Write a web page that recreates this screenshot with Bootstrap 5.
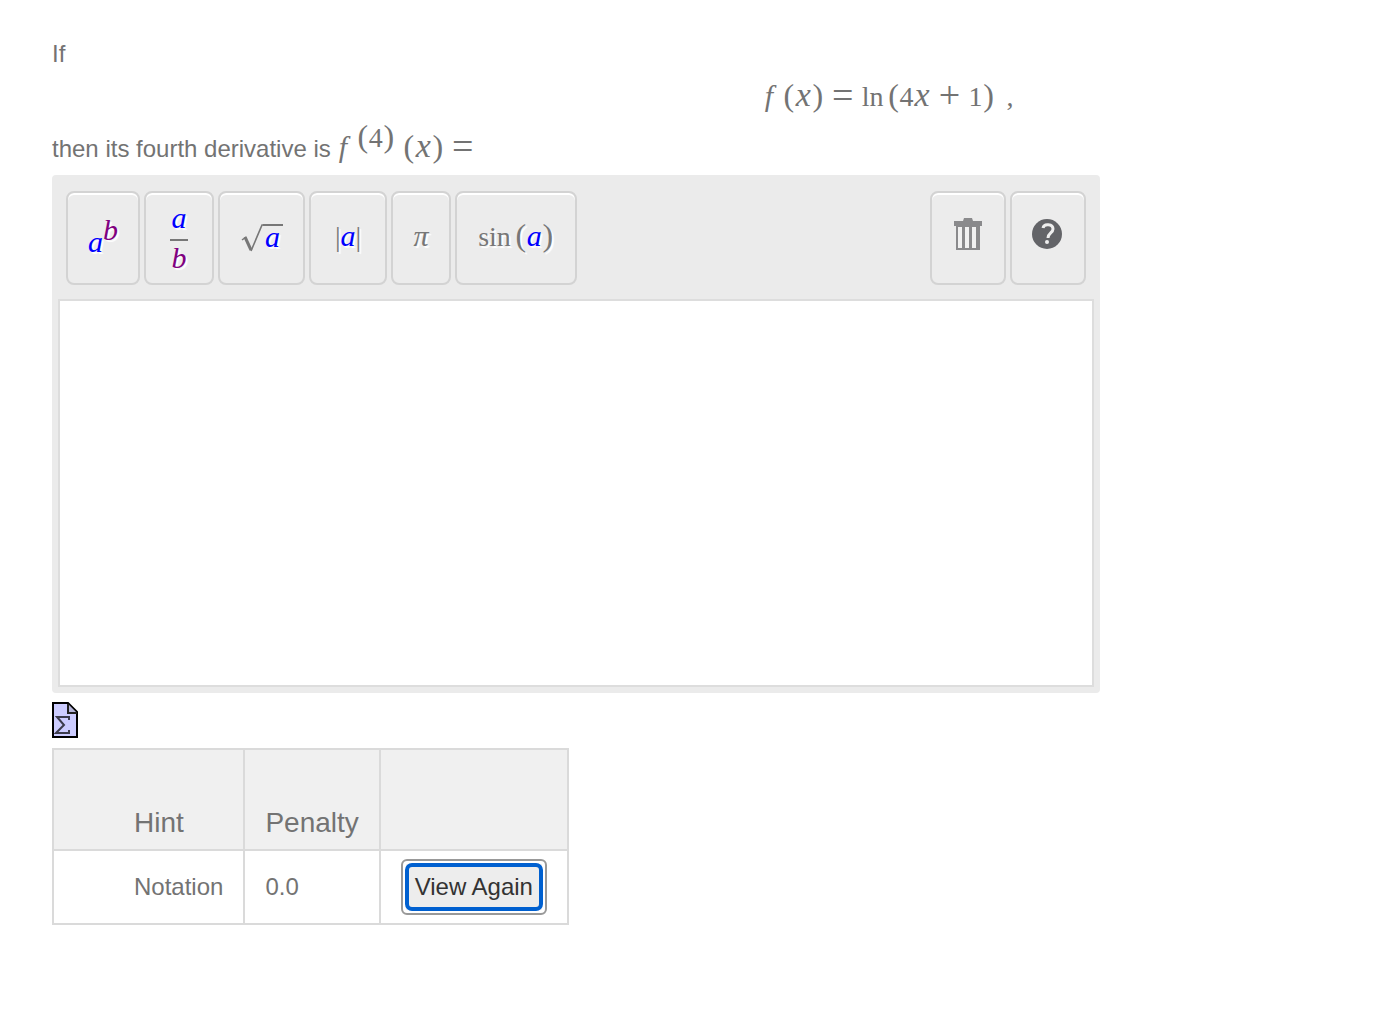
<!DOCTYPE html>
<html lang="en">
<head>
<meta charset="utf-8">
<meta name="viewport" content="width=device-width, initial-scale=1">
<title>Fourth derivative</title>
<link rel="stylesheet" href="https://cdn.jsdelivr.net/npm/bootstrap@5.3.0/dist/css/bootstrap.min.css">
<style>
body{font:24px/36px "Liberation Sans",Arial,sans-serif;color:#737373;background:#fff}
.question{padding:36px 52px}
.display-eq{padding-left:30%;margin:3px 0 10px}
.formula{font-family:"Liberation Serif","Times New Roman",serif;font-size:28px;line-height:36px;white-space:nowrap;display:inline-flex;align-items:baseline}
.formula>span{display:inline-block;text-align:center;flex:none}
.formula i{font-size:30px}
.formula>.fn{width:18px;font-style:italic;font-size:30px;text-align:left}
.par{width:12px;font-size:32px}
.vx{width:17px;font-style:italic;font-size:34px}
.rel{width:38px;font-size:38px;position:relative;top:2px}
.sup{position:relative;top:-10px}
.statement{height:36px;margin-bottom:13px}
.editor{max-width:1048px;background:#ebebeb;border-radius:4px;padding:16px 6px 6px}
.tools{padding:0 8px;margin-bottom:14px;gap:4px}
.tool{height:94px;border:2px solid #d3d3d3;border-radius:8px;background:#ececec;color:#777;padding:0;box-shadow:inset 0 2px 0 #fff;text-shadow:2px 2px 1px #fff;display:flex;align-items:center;justify-content:center}
.tool .formula{margin-bottom:4px}
.va{color:#00f}
.vb{color:#800080}
.t-pow{width:74px}.t-frac{width:70px}.t-root{width:87px}.t-abs{width:78px}.t-pi{width:60px}.t-sin{width:122px}.t-icon{width:76px}
.power{margin-top:12px}
.raised{position:relative;top:-12px}
.fraction{font:italic 30px/34px "Liberation Serif",serif}
.fraction span{display:block;width:18px;text-align:center}
.fraction span:first-child{padding-bottom:4px}
.fraction span+span{border-top:2px solid #777}
.radicand{border-top:2px solid #777;font:italic 30px/22px "Liberation Serif",serif;height:28px;width:20px;text-align:center}
.answer{display:block;width:100%;height:388px;border:2px solid #ddd;border-radius:0;resize:none;padding:12px;background:#fff}
.preview{margin:9px 0 10px}
.hints{border-collapse:collapse}
.hints th,.hints td{border:2px solid #dadada;padding:8px 20px}
.hints th:first-child,.hints td:first-child{padding-left:80px}
.hints th{height:101px;background:#f0f0f0;font-size:28px;font-weight:400;vertical-align:bottom}
.again{position:relative;display:block;width:146px;height:56px;border:2px solid #999;border-radius:6px;background:#ededed;box-shadow:inset 0 0 0 3px #fff;color:#333;padding:0}
.again::after{content:"";position:absolute;inset:2px;border:4px solid #0060d0;border-radius:7px}
</style>
<script src="https://cdn.jsdelivr.net/npm/bootstrap@5.3.0/dist/js/bootstrap.bundle.min.js"></script>
</head>
<body>
<main class="question">
  <p class="m-0">If</p>
  <div class="display-eq text-center">
    <span class="formula"><span class="fn">f</span><span class="par">(</span><span class="vx">x</span><span class="par">)</span><span class="rel">=</span><span class="ln">ln</span><span class="par ms-1">(</span><span>4</span><span class="vx">x</span><span class="rel">+</span><span>1</span><span class="par">)</span><span class="ps-2 ms-1">,</span></span>
  </div>
  <p class="statement d-flex align-items-baseline"><label for="answer">then its fourth derivative is</label>
    <span class="formula ms-2"><span class="fn">f</span><span class="par sup">(</span><span class="sup">4</span><span class="par sup">)</span><span class="par ms-2">(</span><span class="vx">x</span><span class="par">)</span><span class="rel">=</span></span>
  </p>
  <section class="editor">
    <div class="tools d-flex" role="toolbar" aria-label="Equation tools">
      <button type="button" class="tool t-pow" aria-label="Exponent"><span class="formula power"><i class="va">a</i><i class="vb raised">b</i></span></button>
      <button type="button" class="tool t-frac" aria-label="Fraction"><span class="fraction"><span class="va">a</span><span class="vb">b</span></span></button>
      <button type="button" class="tool t-root" aria-label="Square root"><svg width="22" height="32" viewBox="0 0 22 32" fill="none" stroke="#777" aria-hidden="true"><path d="M1 18l4-3" stroke-width="1.5"/><path d="M4 15l6 13" stroke-width="3"/><path d="M10 29L21 3h1" stroke-width="1.6"/></svg><span class="radicand va">a</span></button>
      <button type="button" class="tool t-abs" aria-label="Absolute value"><span class="formula"><span>|</span><i class="va">a</i><span>|</span></span></button>
      <button type="button" class="tool t-pi" aria-label="Pi"><span class="formula"><i>π</i></span></button>
      <button type="button" class="tool t-sin" aria-label="Sine"><span class="formula"><span>sin</span><span class="par ms-1">(</span><i class="va">a</i><span class="par">)</span></span></button>
      <button type="button" class="tool t-icon ms-auto" aria-label="Clear"><svg class="mb-2" width="28" height="32" viewBox="0 0 28 32" aria-hidden="true"><path d="M9 3l1-3h8l1 3h9v5h-2v24H2V8H0V3z" fill="#8a8a8c"/><path d="M4 9h4v21H4zm7 0h4v21h-4zm7 0h4v21h-4z" fill="#f1f1f1"/></svg></button>
      <button type="button" class="tool t-icon" aria-label="Help"><svg class="mb-2" width="32" height="32" viewBox="0 0 32 32" aria-hidden="true"><circle cx="15" cy="16" r="15" fill="#636468"/><path d="M11 10c1-5 10-4 10 1 0 4-5 4-5 9" fill="none" stroke="#eee" stroke-width="3"/><circle cx="15" cy="24" r="2" fill="#eee"/></svg></button>
    </div>
    <textarea class="answer" id="answer"></textarea>
  </section>
  <a href="#answer" class="preview d-block" aria-label="Preview equation"><svg class="d-block" width="26" height="36" viewBox="0 0 26 36" aria-hidden="true"><path d="M1 1h15l9 9v25H1z" fill="#ccf" stroke="#000" stroke-width="2"/><path d="M16 2v9h9" fill="#b5b5d8" stroke="#222" stroke-width="2"/><path d="M17 18v-3H5l7 8-8 8h13v-3" fill="none" stroke="#3b3b4c" stroke-width="2"/></svg></a>
  <table class="hints">
    <thead><tr><th scope="col">Hint</th><th scope="col">Penalty</th><th aria-label="Action"></th></tr></thead>
    <tbody><tr><td>Notation</td><td>0.0</td><td><button type="button" class="again">View Again</button></td></tr></tbody>
  </table>
</main>
</body>
</html>
